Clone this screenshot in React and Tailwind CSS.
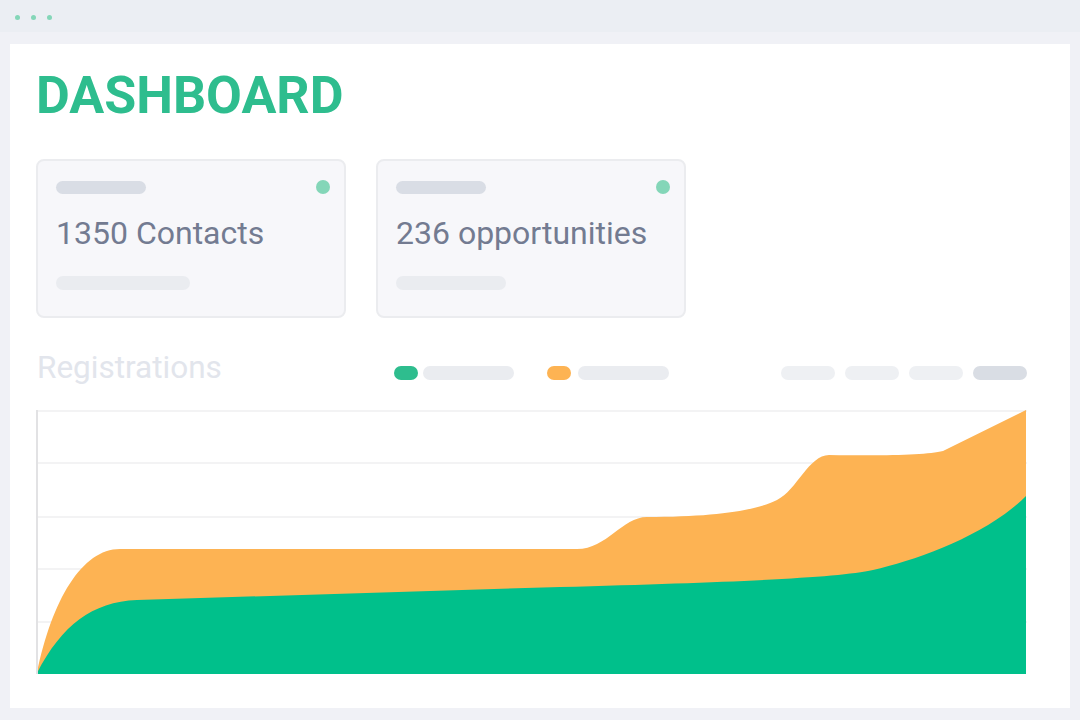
import React from "react";

function Card({ text, bottomW }) {
  return (
    <div className="w-[310px] h-[159px] rounded-[8px] border-2 border-[#ebecef] bg-[#f7f7fa] pl-[18px] pr-[14px] pt-[19px] flex flex-col">
      <div className="flex justify-between items-center h-[14px]">
        <div className="w-[90px] h-[13px] rounded-full bg-[#d9dde5]" />
        <div className="w-[14px] h-[14px] rounded-full bg-[#84d6b8]" />
      </div>
      <div className="mt-[23px] text-[32px] leading-[32px] text-[#737b91] whitespace-nowrap">{text}</div>
      <div className="mt-[27px] h-[14px] rounded-full bg-[#eaecf0]" style={{ width: bottomW }} />
    </div>
  );
}

function Chart() {
  const orange =
    "M0,263 C15,190 45,139 83,139 L540,139 C570,139 585,107 610,107 C680,107 720,100 740,90 C760,80 772,45 792,45 C850,46 890,45 906,41 L989,0 L989,264 L0,264 Z";
  const green =
    "M0,263 C25,215 55,192 100,190 L523,177 C700,172 800,168 836,160 C880,150 950,125 989,86 L989,264 L0,264 Z";
  return (
    <svg width="991" height="266" viewBox="0 0 991 266" className="block">
      {[2, 54, 108, 160, 213].map((y) => (
        <line key={y} x1="1" x2="991" y1={y} y2={y} stroke="#f3f3f4" strokeWidth="2" />
      ))}
      <g transform="translate(1,1)">
        <path d={orange} fill="#fdb353" />
        <path d={green} fill="#00c08b" />
      </g>
      <line x1="1" x2="1" y1="1" y2="265" stroke="#e2e2e4" strokeWidth="2" />
    </svg>
  );
}

export default function App() {
  return (
    <div className="w-[1080px] h-[720px] bg-[#f0f1f6] flex flex-col" style={{ fontFamily: "Roboto, 'Noto Sans', sans-serif" }}>
      <div className="h-[32px] bg-[#ebeef3] flex items-start pt-[15px] pl-[15px] gap-[11px] shrink-0">
        <div className="w-[5px] h-[5px] rounded-full bg-[#84d6b8]" />
        <div className="w-[5px] h-[5px] rounded-full bg-[#84d6b8]" />
        <div className="w-[5px] h-[5px] rounded-full bg-[#84d6b8]" />
      </div>
      <div className="flex-1 px-[10px] pt-[12px] pb-[12px] flex">
        <div className="flex-1 bg-white pl-[26px] pr-[43px] flex flex-col">
          <div className="mt-[26px] text-[52px] leading-[52px] font-bold text-[#2ebd8e]">DASHBOARD</div>
          <div className="mt-[37px] flex gap-[30px]">
            <Card text="1350 Contacts" bottomW={134} />
            <Card text="236 opportunities" bottomW={110} />
          </div>
          <div className="mt-[34px] flex items-start h-[31px]">
            <div className="w-[358px] pl-[1px] text-[31.5px] leading-[31px] text-[#e2e5ec] whitespace-nowrap">Registrations</div>
            <div className="mt-[14px] flex items-center">
              <div className="w-[24px] h-[14px] rounded-full bg-[#2ebd8e]" />
              <div className="ml-[5px] w-[91px] h-[14px] rounded-full bg-[#eaecf0]" />
              <div className="ml-[33px] w-[24px] h-[14px] rounded-full bg-[#fdb353]" />
              <div className="ml-[7px] w-[91px] h-[14px] rounded-full bg-[#eaecf0]" />
            </div>
            <div className="flex-1" />
            <div className="mt-[14px] flex gap-[10px]">
              <div className="w-[54px] h-[14px] rounded-full bg-[#eef0f3]" />
              <div className="w-[54px] h-[14px] rounded-full bg-[#eef0f3]" />
              <div className="w-[54px] h-[14px] rounded-full bg-[#eef0f3]" />
              <div className="w-[54px] h-[14px] rounded-full bg-[#d9dde4]" />
            </div>
          </div>
          <div className="mt-[26px]">
            <Chart />
          </div>
        </div>
      </div>
    </div>
  );
}
